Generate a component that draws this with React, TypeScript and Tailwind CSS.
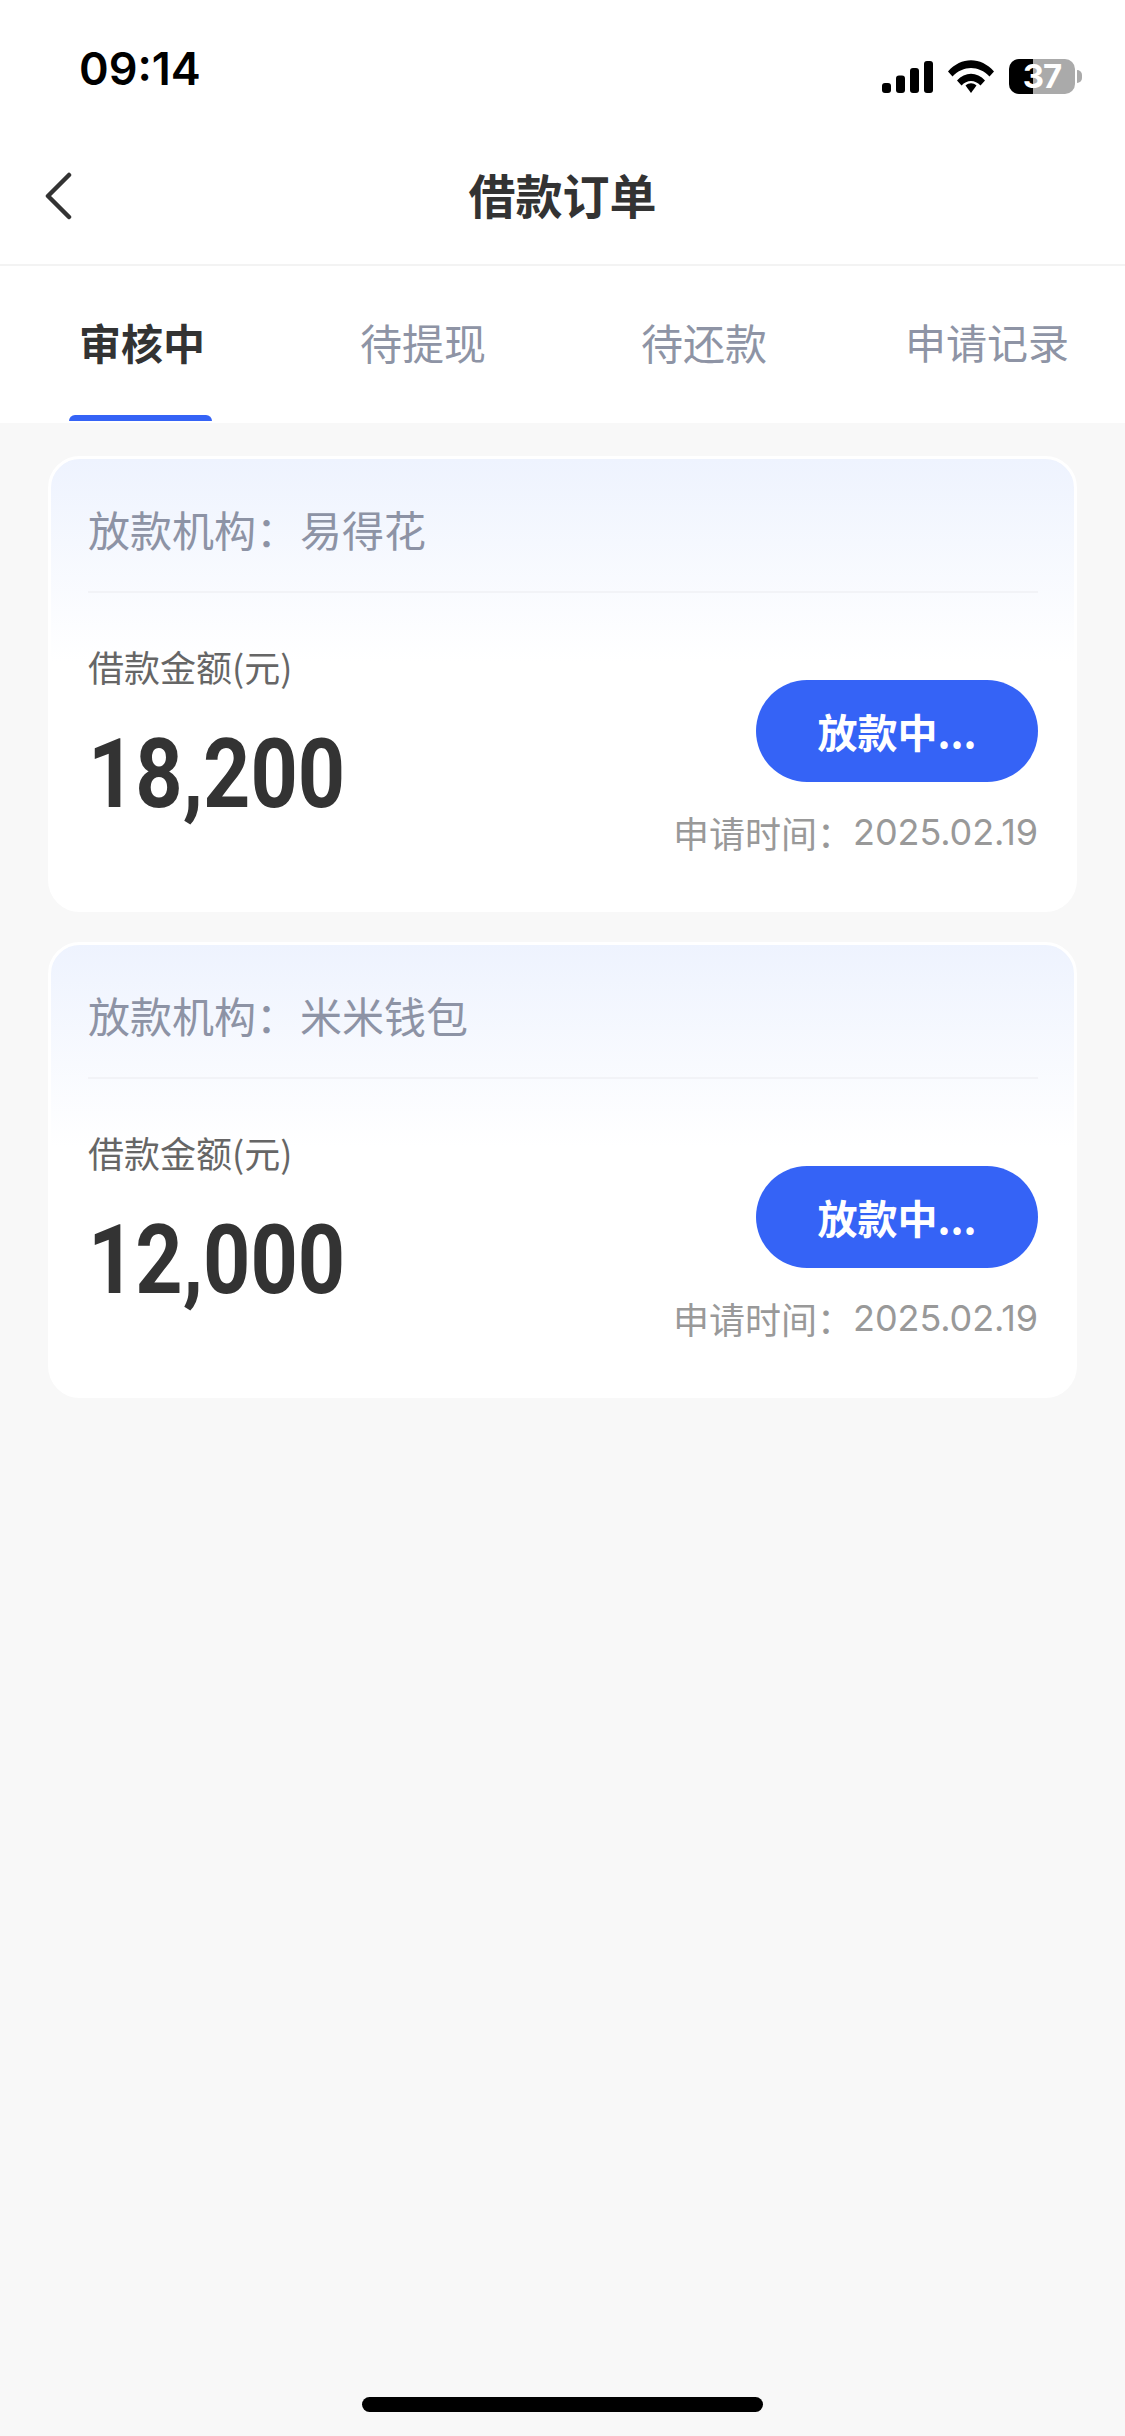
function StatusIcons() {
  return (
    <div className="flex items-center">
      <svg width="51" height="32" viewBox="0 0 51 32" className="mr-[15px]">
        <rect x="0" y="22" width="9" height="10" rx="3" fill="#000" />
        <rect x="14" y="14.5" width="9" height="17.5" rx="3" fill="#000" />
        <rect x="28" y="7" width="9" height="25" rx="3" fill="#000" />
        <rect x="42" y="0" width="9" height="32" rx="3" fill="#000" />
      </svg>
      <svg width="46" height="33" viewBox="0 0 46 33" className="mr-[15px]">
        <path d="M0 11.5 C13 -3.5 33 -3.5 46 11.5 L41.5 16.5 C31 5 15 5 4.500 16.500 Z" fill="#000" />
        <path d="M9 20.500 C17 11.500 29 11.500 37 20.500 L32.500 25.500 C27 19.500 19 19.500 13.500 25.500 Z" fill="#000" />
        <path d="M17.500 25.500 C21 22.500 25 22.500 28.500 25.500 L23 33 Z" fill="#000" />
      </svg>
      <div className="relative flex h-[35px] w-[66px] overflow-hidden rounded-[10px] bg-[#aaaaaa]">
        <div className="h-full w-[24px] bg-black" />
        <span className="absolute inset-0 flex items-center justify-center font-['Inter',sans-serif] text-[33px] leading-none font-bold tracking-[-1px] text-white">
          37
        </span>
      </div>
      <div className="ml-[2px] h-[13px] w-[5px] rounded-r-full bg-[#aaaaaa]" />
    </div>
  );
}

function Card({ org, amount }: { org: string; amount: string }) {
  return (
    <div className="h-[456px] w-[1029px] rounded-[32px] border-[3px] border-white bg-[linear-gradient(180deg,#eef3fe_0%,#ffffff_45%)] pr-[36px] pl-[37px]">
      <div className="flex h-[134px] items-center border-b-[2px] border-[#f2f3f7] pt-[8px] font-['Noto_Sans_CJK_SC',sans-serif] text-[42px] leading-none text-[#8d93a5]">
        <span>放款机构：</span>
        <span className="ml-[2px]">{org}</span>
      </div>
      <div className="flex justify-between">
        <div className="flex flex-col">
          <span className="mt-[51px] font-['Noto_Sans_CJK_SC',sans-serif] text-[36px] leading-[44px] text-[#666666]">
            借款金额(元)
          </span>
          <span className="mt-[36px] origin-left scale-x-[0.86] font-['Roboto',sans-serif] text-[96px] leading-[100px] font-bold text-[#333333]">
            {amount}
          </span>
        </div>
        <div className="flex flex-col items-end pt-[87px]">
          <div className="flex h-[102px] w-[282px] items-center justify-center rounded-full bg-[#3563f6] font-['Noto_Sans_CJK_SC',sans-serif] text-[40px] font-semibold text-white">
            放款中...
          </div>
          <div className="mt-[27px] flex items-center text-[36px] leading-[46px] text-[#999999]">
            <span className="font-['Noto_Sans_CJK_SC',sans-serif]">申请时间：</span>
            <span className="font-['Inter',sans-serif] tracking-[-0.1px]">2025.02.19</span>
          </div>
        </div>
      </div>
    </div>
  );
}

export default function App() {
  return (
    <div className="flex h-[2436px] w-[1125px] flex-col overflow-hidden bg-[#f8f8f8]">
      <div className="flex h-[132px] items-end justify-between bg-white pr-[43px] pb-[41px] pl-[79px]">
        <span className="font-['Inter',sans-serif] text-[45px] leading-[44px] font-semibold text-black">09:14</span>
        <div className="mb-[-3px]">
          <StatusIcons />
        </div>
      </div>
      <div className="relative flex h-[134px] items-center justify-center border-b-[2px] border-[#f3f3f3] bg-white pb-[10px]">
        <svg width="28" height="48" viewBox="0 0 28 48" className="absolute top-[40px] left-[44px]" fill="none">
          <path d="M25 3 L4 24 L25 45" stroke="#333333" strokeWidth="4.500" strokeLinecap="round" strokeLinejoin="round" />
        </svg>
        <span className="font-['Noto_Sans_CJK_SC',sans-serif] text-[47px] leading-none font-bold text-[#333333]">借款订单</span>
      </div>
      <div className="relative flex h-[157px] items-center bg-white pb-[6px] font-['Noto_Sans_CJK_SC',sans-serif] text-[42px] leading-none text-[#8e94a5]">
        <div className="relative ml-[79px] font-bold text-[#333333]">
          审核中
          <div className="absolute -bottom-[58px] -left-[10px] h-[6px] w-[143px] rounded-t-[6px] bg-[#3563f6]" />
        </div>
        <div className="ml-[155px]">待提现</div>
        <div className="ml-[155px]">待还款</div>
        <div className="ml-[138px] text-[41px]">申请记录</div>
      </div>
      <div className="flex flex-col items-center gap-[30px] pt-[33px]">
        <Card org="易得花" amount="18,200" />
        <Card org="米米钱包" amount="12,000" />
      </div>
      <div className="mt-auto mb-[24px] flex justify-center">
        <div className="h-[15px] w-[401px] rounded-full bg-black" />
      </div>
    </div>
  );
}
